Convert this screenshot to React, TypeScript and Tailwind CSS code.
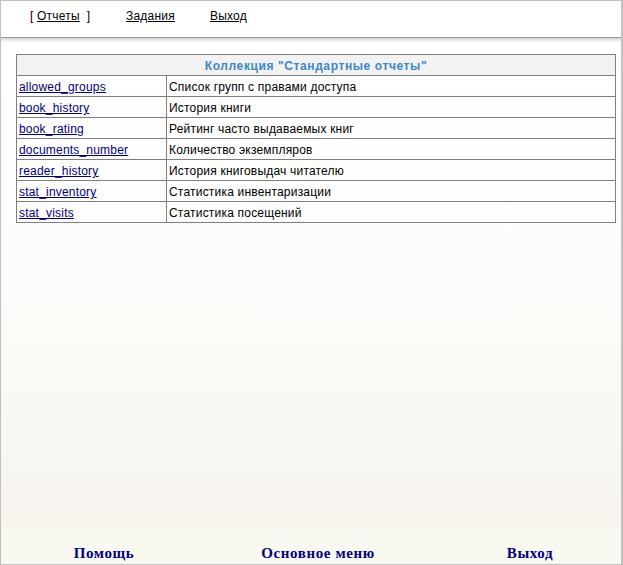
import React from "react";

const rows: [string, string][] = [
  ["allowed_groups", "Список групп с правами доступа"],
  ["book_history", "История книги"],
  ["book_rating", "Рейтинг часто выдаваемых книг"],
  ["documents_number", "Количество экземпляров"],
  ["reader_history", "История книговыдач читателю"],
  ["stat_inventory", "Статистика инвентаризации"],
  ["stat_visits", "Статистика посещений"],
];

export default function App() {
  return (
    <div className="w-[623px] h-[565px] flex flex-col border-t border-l border-b border-r-2 border-[#c0c0c0] bg-white font-['Liberation_Sans',Arial,sans-serif] text-[12px] text-black overflow-hidden">
      <div className="h-[37px] shrink-0 bg-white border-b border-[#999] flex items-start pt-[6px] pl-[29px] tracking-[0.2px]">
        <span className="w-[96px] whitespace-pre">
          {"[ "}<a className="underline">Отчеты</a>{"  ]"}
        </span>
        <a className="underline w-[84px]">Задания</a>
        <a className="underline">Выход</a>
      </div>
      <div className="h-[4px] shrink-0 bg-gradient-to-b from-[#d4d4d4] to-[#fbfbfb]" />
      <div className="flex-1 bg-gradient-to-b from-[#ffffff] via-[#fcfcfa] to-[#f7f4ee] pt-[12px] px-[15px]">
        <table className="w-[600px] border-collapse border border-[#808080] tracking-[0.2px]">
          <thead>
            <tr className="h-[21px] bg-[#f2f2f2]">
              <th colSpan={2} className="border border-[#808080] text-center font-bold text-[#3a87c8] p-0 pt-[1px] tracking-[0.6px]">
                Коллекция "Стандартные отчеты"
              </th>
            </tr>
          </thead>
          <tbody>
            {rows.map(([k, v]) => (
              <tr key={k} className="h-[21px]">
                <td className="w-[150px] border border-[#808080] pl-[2px] p-0 pt-[2px] leading-[18px]">
                  <a className="underline text-[#000080]">{k}</a>
                </td>
                <td className="border border-[#808080] pl-[2px] p-0 pt-[2px] leading-[18px]">{v}</td>
              </tr>
            ))}
          </tbody>
        </table>
      </div>
      <div className="h-[36px] shrink-0 bg-[#f9f8f1] flex items-end pb-[2px] font-['Liberation_Serif','Times_New_Roman',serif] font-bold text-[15px] leading-[18px] tracking-[0.6px] text-[#000080]">
        <div className="w-[206px] text-center">Помощь</div>
        <div className="w-[222px] text-center">Основное меню</div>
        <div className="flex-1 text-center pl-[10px]">Выход</div>
      </div>
    </div>
  );
}
